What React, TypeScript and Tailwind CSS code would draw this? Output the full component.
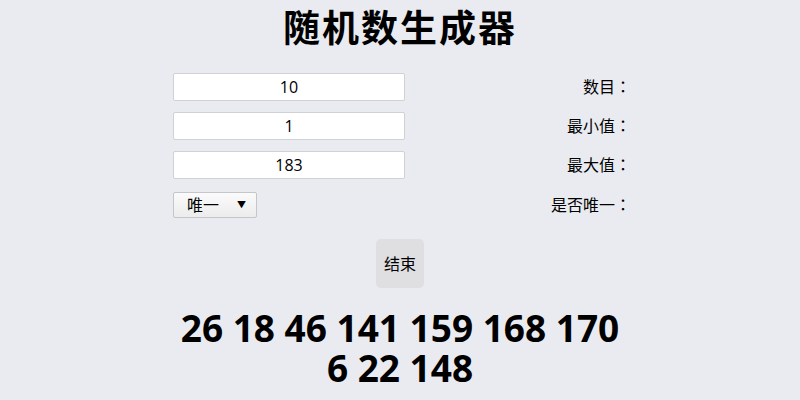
const ROWS = [
  { label: "数目：", value: "10" },
  { label: "最小值：", value: "1" },
  { label: "最大值：", value: "183" },
];

const RESULT = [26, 18, 46, 141, 159, 168, 170, 6, 22, 148];

export default function App() {
  return (
    <div
      className="flex h-[400px] w-[800px] flex-col items-center overflow-hidden bg-[#e9ebf0] text-black"
      style={{ fontFamily: '"Open Sans", "Noto Sans CJK TC", sans-serif' }}
    >
      <h1 className="mt-[5px] text-[37px] font-bold leading-[46px] tracking-[2px]">随机数生成器</h1>

      <div className="mt-[22px] flex w-[458px] translate-x-[2px] flex-col gap-[11px]">
        {ROWS.map((r) => (
          <div key={r.label} className="flex h-[28px] items-center justify-between">
            <div className="flex h-[28px] w-[232px] items-center justify-center rounded-[2px] border border-[#cfd1d5] bg-white text-[16px]">
              {r.value}
            </div>
            <span className="text-[16px]">{r.label}</span>
          </div>
        ))}
        <div className="mt-[2px] flex h-[26px] items-center justify-between">
          <div className="flex h-[26px] w-[84px] items-center justify-between rounded-[2px] border border-[#c4c6ca] bg-gradient-to-b from-[#fbfbfb] to-[#ececec] pl-[13px] pr-[10px] text-[16px]">
            <span>唯一</span>
            <span className="text-[9px]">▼</span>
          </div>
          <span className="text-[16px]">是否唯一：</span>
        </div>
      </div>

      <button className="mt-[21px] flex h-[49px] w-[48px] items-center justify-center rounded-[5px] bg-[#dfdfe2] text-[16px]">
        结束
      </button>

      <div className="mt-[20px] w-[448px] text-center text-[37px] font-bold leading-[40px]">
        {RESULT.join(" ")}
      </div>
    </div>
  );
}
